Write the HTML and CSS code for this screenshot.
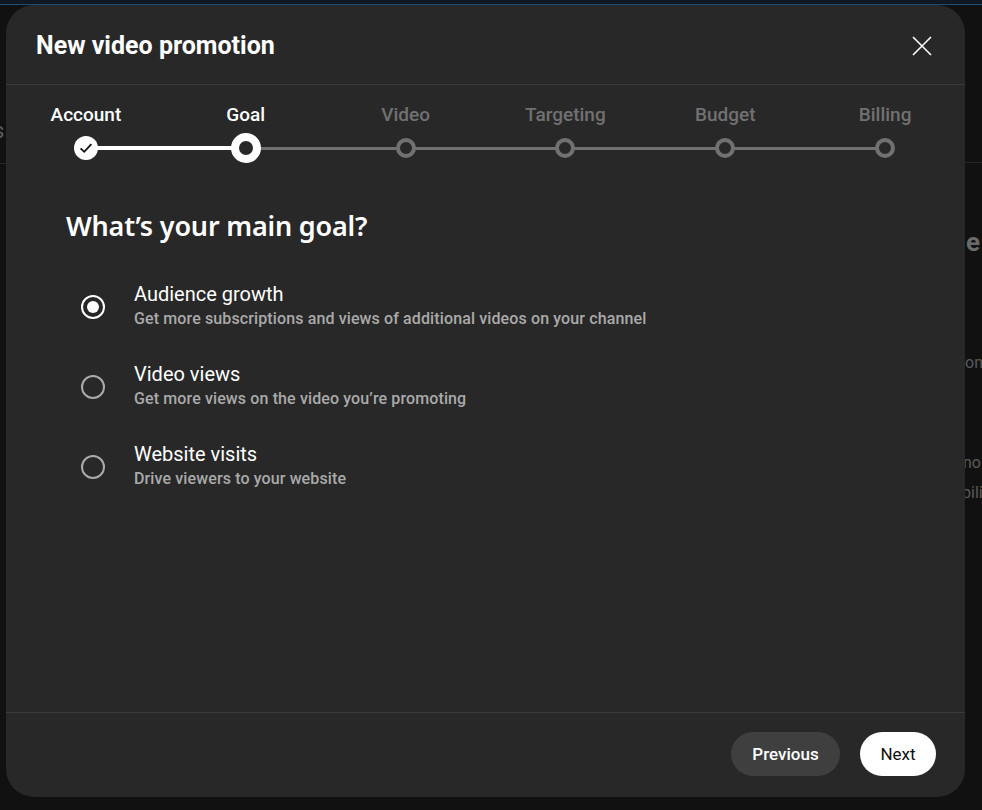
FILE: index.html
```html
<!DOCTYPE html>
<html lang="en">
<head>
<meta charset="utf-8">
<title>New video promotion</title>
<link rel="stylesheet" href="styles.css">
</head>
<body>
<div class="page">
  <div class="topbar"></div>
  <div class="backdrop">
    <div class="bg-left">
      <div class="bg-s">s</div>
      <div class="bg-rule"></div>
    </div>
    <div class="bg-right">
      <div class="bg-rule bg-rule-r"></div>
      <div class="bg-e">e</div>
      <div class="bg-t1">on</div>
      <div class="bg-t2">no</div>
      <div class="bg-t3">bili</div>
    </div>
  </div>
</div>

<div class="dialog" role="dialog" aria-label="New video promotion">
  <header class="dlg-header">
    <h1 class="dlg-title">New video promotion</h1>
    <button class="close" aria-label="Close">
      <svg width="20" height="20" viewBox="0 0 20 20"><path d="M1 1 L19 19 M19 1 L1 19" stroke="#fff" stroke-width="1.6" fill="none"/></svg>
    </button>
  </header>

  <div class="dlg-body">
    <ol class="stepper">
      <li class="step done">
        <span class="step-label">Account</span>
        <span class="track"><span class="dot"><svg width="16" height="16" viewBox="0 0 16 16"><path d="M2.6 8.4 L6.2 11.8 L13.4 4.2" stroke="#0f0f0f" stroke-width="1.8" fill="none"/></svg></span></span>
      </li>
      <li class="step current">
        <span class="step-label">Goal</span>
        <span class="track"><span class="dot"></span></span>
      </li>
      <li class="step">
        <span class="step-label">Video</span>
        <span class="track"><span class="dot"></span></span>
      </li>
      <li class="step">
        <span class="step-label">Targeting</span>
        <span class="track"><span class="dot"></span></span>
      </li>
      <li class="step">
        <span class="step-label">Budget</span>
        <span class="track"><span class="dot"></span></span>
      </li>
      <li class="step">
        <span class="step-label">Billing</span>
        <span class="track"><span class="dot"></span></span>
      </li>
    </ol>

    <section class="goal">
      <h2 class="goal-title">What’s your main goal?</h2>
      <div class="options">
        <div class="option">
          <span class="radio checked"></span>
          <div class="opt-text">
            <div class="opt-title">Audience growth</div>
            <div class="opt-sub">Get more subscriptions and views of additional videos on your channel</div>
          </div>
        </div>
        <div class="option">
          <span class="radio"></span>
          <div class="opt-text">
            <div class="opt-title">Video views</div>
            <div class="opt-sub">Get more views on the video you’re promoting</div>
          </div>
        </div>
        <div class="option">
          <span class="radio"></span>
          <div class="opt-text">
            <div class="opt-title">Website visits</div>
            <div class="opt-sub">Drive viewers to your website</div>
          </div>
        </div>
      </div>
    </section>
  </div>

  <footer class="dlg-footer">
    <button class="btn btn-prev">Previous</button>
    <button class="btn btn-next">Next</button>
  </footer>
</div>
</body>
</html>
```
FILE: styles.css
```css
* { box-sizing: border-box; }
html, body { margin: 0; padding: 0; }
body {
  width: 982px;
  height: 810px;
  overflow: hidden;
  background: #111111;
  font-family: Roboto, "Liberation Sans", Arial, sans-serif;
  color: #fff;
  position: relative;
}

/* backdrop page */
.page { height: 810px; display: flex; flex-direction: column; }
.topbar {
  height: 5px;
  background: #121821;
  border-bottom: 1px solid #1d4c74;
}
.backdrop { flex: 1; display: flex; justify-content: space-between; }
.bg-left { width: 6px; overflow: hidden; padding-top: 111px; }
.bg-s { font-size: 22px; color: #5c5c5c; margin-left: -7px; line-height: 30px; }
.bg-rule { height: 1px; background: #262626; margin-top: 17px; width: 40px; }
.bg-right { width: 17px; overflow: hidden; padding-top: 157px; color: #5e5e5e; }
.bg-rule-r { margin-top: 0; margin-bottom: 64px; }
.bg-e { font-size: 26px; font-weight: 700; line-height: 30px; margin-left: 1px; color: #6a6a6a; }
.bg-t1 { font-size: 16px; line-height: 20px; margin-top: 96px; color: #5a5a5a; }
.bg-t2 { font-size: 16px; line-height: 20px; margin-top: 80px; margin-left: -2px; color: #5a5a5a; }
.bg-t3 { font-size: 16px; line-height: 20px; margin-top: 10px; margin-left: -3px; color: #5a5a5a; }

/* dialog */
.dialog {
  position: absolute;
  left: 6px;
  top: 5px;
  width: 959px;
  height: 792px;
  background: #282828;
  border-radius: 28px;
  display: flex;
  flex-direction: column;
  overflow: hidden;
}
.dlg-header {
  height: 80px;
  flex: none;
  display: flex;
  align-items: center;
  justify-content: space-between;
  padding: 3px 34px 0 30px;
  border-bottom: 1px solid #3b3b3b;
}
.dlg-title {
  margin: 0;
  font-size: 25px;
  font-weight: 700;
  line-height: 30px;
}
.close {
  width: 20px; height: 20px; padding: 0; border: 0; background: none;
  display: flex; cursor: pointer; margin-right: -1px;
}

.dlg-body { flex: 1; }

.stepper {
  list-style: none;
  margin: 0;
  padding: 17px 0 0;
  display: grid;
  grid-template-columns: repeat(6, 1fr);
}
.step { display: flex; flex-direction: column; align-items: center; }
.step-label {
  font-size: 19px;
  font-weight: 500;
  line-height: 24px;
  color: #717171;
  padding-top: 1px;
}
.step.done .step-label, .step.current .step-label { color: #fff; }
.track {
  margin-top: 5px;
  height: 32px;
  width: 100%;
  position: relative;
  display: flex;
  align-items: center;
  justify-content: center;
}
.track::before, .track::after {
  content: "";
  position: absolute;
  top: 50%;
  height: 3px;
  margin-top: -1.5px;
  width: 50%;
  background: #717171;
}
.track::before { left: 0; }
.track::after { right: 0; }
.step:first-child .track::before, .step:last-child .track::after { display: none; }
.step.done .track::after, .step.current .track::before { background: #fff; height: 4px; margin-top: -2px; }

.dot {
  position: relative;
  z-index: 1;
  width: 20px;
  height: 20px;
  border-radius: 50%;
  border: 4px solid #717171;
  background: #282828;
}
.step.done .dot {
  width: 24px; height: 24px; border: 0; background: #fff;
  display: flex; align-items: center; justify-content: center;
}
.step.current .dot {
  width: 30px; height: 30px; border: 8px solid #fff; background: #282828;
}

.goal { padding: 44px 60px 0; }
.goal-title {
  margin: 0;
  font-family: "Noto Sans", "Open Sans", sans-serif;
  font-size: 27px;
  font-weight: 600;
  line-height: 36px;
  letter-spacing: -0.2px;
}
.options { margin-top: 38px; display: flex; flex-direction: column; gap: 33px; padding-left: 15px; }
.option { display: flex; align-items: center; }
.radio {
  flex: none;
  width: 24px; height: 24px;
  border-radius: 50%;
  border: 2px solid #aaaaaa;
  margin-right: 29px;
  margin-top: 2px;
  position: relative;
}
.radio.checked { border-color: #fff; }
.radio.checked::after {
  content: "";
  position: absolute;
  left: 50%; top: 50%;
  width: 12px; height: 12px;
  margin: -6px 0 0 -6px;
  border-radius: 50%;
  background: #fff;
}
.opt-title { font-size: 20px; line-height: 24px; color: #fff; }
.opt-sub { font-size: 16px; font-weight: 500; line-height: 20px; color: #aaaaaa; margin-top: 3px; letter-spacing: 0.12px; }

.dlg-footer {
  flex: none;
  height: 85px;
  border-top: 1px solid #3b3b3b;
  display: flex;
  align-items: center;
  justify-content: flex-end;
  gap: 20px;
  padding: 0 29px 2px 0;
}
.btn {
  height: 44px;
  border: 0;
  border-radius: 22px;
  font-family: Roboto, "Liberation Sans", Arial, sans-serif;
  font-size: 17px;
  font-weight: 500;
  padding: 0 18px;
  cursor: pointer;
}
.btn-prev { background: #3f3f3f; color: #fff; width: 109px; }
.btn-next { background: #fff; color: #0f0f0f; width: 76px; font-weight: 400; }
```
